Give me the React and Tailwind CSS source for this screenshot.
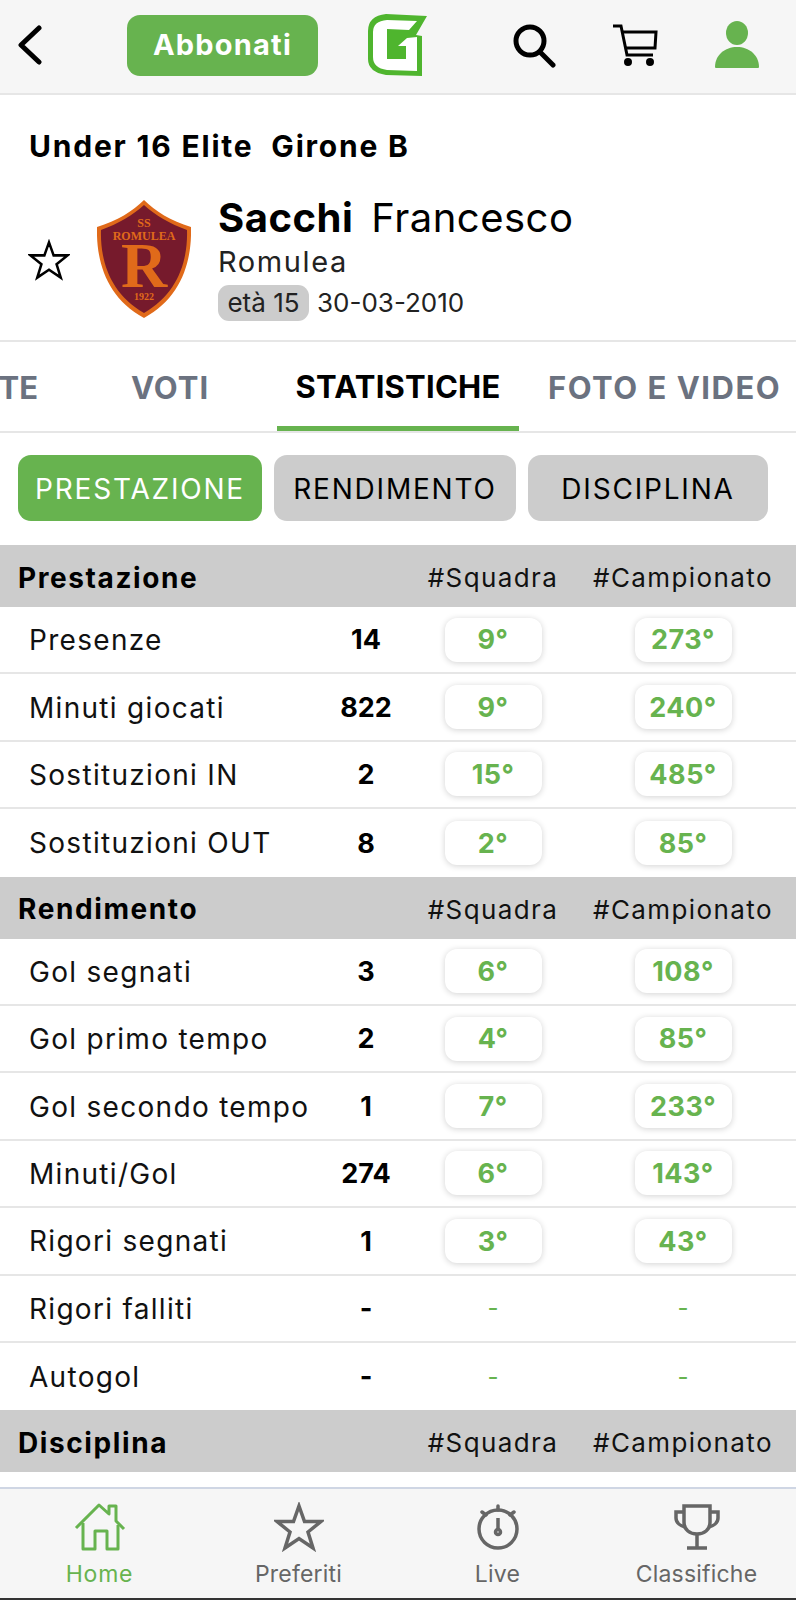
const GREEN = '#67b34f';

const SECTIONS = [
  {
    title: 'Prestazione',
    rows: [
      ['Presenze', '14', '9°', '273°'],
      ['Minuti giocati', '822', '9°', '240°'],
      ['Sostituzioni IN', '2', '15°', '485°'],
      ['Sostituzioni OUT', '8', '2°', '85°'],
    ],
  },
  {
    title: 'Rendimento',
    rows: [
      ['Gol segnati', '3', '6°', '108°'],
      ['Gol primo tempo', '2', '4°', '85°'],
      ['Gol secondo tempo', '1', '7°', '233°'],
      ['Minuti/Gol', '274', '6°', '143°'],
      ['Rigori segnati', '1', '3°', '43°'],
      ['Rigori falliti', '-', '-', '-'],
      ['Autogol', '-', '-', '-'],
    ],
  },
  { title: 'Disciplina', rows: [] },
];

const Logo = () => (
  <svg width="60" height="63" viewBox="18 15 60 63" className="shrink-0">
    <path d="M36 15 L77 17 L66 36 L72 37 L72 77 L36 76 Q18 73 18 60 L18 32 Q18 17 36 15 Z" fill="#4fb52e" />
    <path d="M37 21 L67 22 L59 31 L37 30 L37 60 L56 60 L56 47 L48 47 L57 39 L67 38 L67 72 L37 71 Q23 69 23 58 L23 33 Q23 22 37 21 Z" fill="#fff" />
  </svg>
);

const Crest = () => (
  <svg width="94" height="118" viewBox="0 0 94 118" className="shrink-0">
    <path d="M47 0 C58 11 74 21 94 27 C95 62 84 98 47 118 C10 98 -1 62 0 27 C20 21 36 11 47 0 Z" fill="#e06a1a" />
    <path d="M47 5 C58 15 73 24 90 30 C91 62 80 94 47 113 C14 94 3 62 4 30 C21 24 36 15 47 5 Z" fill="#761a2c" />
    <text x="47" y="27" textAnchor="middle" fontFamily="Liberation Serif" fontWeight="700" fontSize="12" fill="#e06a1a">SS</text>
    <text x="47" y="40" textAnchor="middle" fontFamily="Liberation Serif" fontWeight="700" fontSize="12" fill="#e06a1a">ROMULEA</text>
    <text x="47" y="87" textAnchor="middle" fontFamily="Liberation Serif" fontWeight="700" fontSize="64" fill="#e06a1a">R</text>
    <text x="47" y="100" textAnchor="middle" fontFamily="Liberation Serif" fontWeight="700" fontSize="10" fill="#e06a1a">1922</text>
  </svg>
);

const Star = ({ size, color, width }) => (
  <svg width={size} height={size} viewBox="0 0 50 48" fill="none" stroke={color} strokeWidth={width} strokeLinejoin="miter" className="shrink-0">
    <path d="M25 3 L30.5 18.5 L47 18.5 L34 29 L39 45 L25 35.5 L11 45 L16 29 L3 18.5 L19.5 18.5 Z" />
  </svg>
);

const Header = () => (
  <div className="h-[95px] shrink-0 bg-[#f6f6f6] border-b-2 border-[#e6e6e6] flex items-center">
    <svg width="24" height="40" viewBox="0 0 24 40" fill="none" stroke="#000" strokeWidth="5" strokeLinecap="round" strokeLinejoin="round" className="ml-[18px] mb-[3px]">
      <path d="M21 3 L3 20 L21 37" />
    </svg>
    <div className="ml-[85px] w-[191px] h-[61px] rounded-[13px] bg-[#67b34f] text-white font-bold text-[29px] tracking-[1.2px] flex items-center justify-center mb-[3px]">
      Abbonati
    </div>
    <div className="ml-[50px] mb-[3px]"><Logo /></div>
    <svg width="44" height="44" viewBox="0 0 44 44" fill="none" stroke="#000" strokeWidth="5" strokeLinecap="round" className="ml-[84px] mb-[2px]">
      <circle cx="18" cy="17" r="14" />
      <path d="M28 28 L41 41" />
    </svg>
    <svg width="46" height="42" viewBox="0 0 46 42" fill="none" stroke="#000" strokeWidth="3" className="ml-[56px] mb-[4px]">
      <path d="M1 2 L9 2 L15 31 L41 31" />
      <path d="M10 8 L44 8 L43 24 L13 24" />
      <circle cx="16" cy="38" r="2.5" fill="#000" />
      <circle cx="38" cy="38" r="2.5" fill="#000" />
    </svg>
    <svg width="44" height="48" viewBox="0 0 44 48" fill={GREEN} className="ml-[57px] mb-[4px]">
      <ellipse cx="22" cy="12" rx="11" ry="12" />
      <path d="M0 46 C0 34 10 26 22 26 C34 26 44 34 44 46 Q44 47 43 47 L1 47 Q0 47 0 46 Z" />
    </svg>
  </div>
);

const Profile = () => (
  <div className="shrink-0 h-[247px] border-b-2 border-[#e6e6e6] pt-[31px]">
    <div className="pl-[29px] font-bold text-[30px] leading-[40px] text-black tracking-[1.8px]">Under 16 Elite&nbsp; Girone B</div>
    <div className="flex items-center mt-[30px]">
      <div className="ml-[28px] mt-[2px]"><Star size={42} color="#000" width={3} /></div>
      <div className="ml-[27px]"><Crest /></div>
      <div className="ml-[27px] flex flex-col">
        <div className="text-[40px] leading-[44px] text-black tracking-[0.5px]">
          <span className="font-bold">Sacchi</span>
          <span className="ml-[18px]">Francesco</span>
        </div>
        <div className="text-[29px] leading-[34px] mt-[5px] text-[#222] tracking-[1.6px]">Romulea</div>
        <div className="flex items-center mt-[4px]">
          <span className="w-[91px] h-[36px] rounded-[11px] bg-[#cccccc] text-[26px] text-[#222] flex items-center justify-center">età 15</span>
          <span className="ml-[8px] text-[26px] text-[#222]">30-03-2010</span>
        </div>
      </div>
    </div>
  </div>
);

const Tabs = () => (
  <div className="shrink-0 h-[91px] border-b-2 border-[#e6e6e6] flex overflow-hidden font-bold text-[31px] text-[#6b7280]">
    <div className="w-[38px] shrink-0 flex items-center justify-end pt-[4px]">TE</div>
    <div className="w-[264px] shrink-0 flex items-center justify-center pt-[4px] tracking-[1px]">VOTI</div>
    <div className="-ml-[25px] w-[242px] h-[89px] shrink-0 flex items-center justify-center pt-[7px] border-b-[5px] border-[#67b34f] text-black tracking-[0.2px]">STATISTICHE</div>
    <div className="ml-[29px] shrink-0 flex items-center pt-[4px] whitespace-nowrap tracking-[1.5px]">FOTO E VIDEO</div>
  </div>
);

const FILTERS = ['PRESTAZIONE', 'RENDIMENTO', 'DISCIPLINA'];

const Filters = () => (
  <div className="shrink-0 h-[112px] pt-[22px] pl-[18px] flex gap-[12px]">
    {FILTERS.map((f, i) => (
      <div
        key={f}
        className={`h-[66px] rounded-[13px] flex items-center justify-center pt-[1px] text-[28px] tracking-[1.8px] ${i === 0 ? 'w-[244px] bg-[#67b34f] text-white' : i === 1 ? 'w-[242px] bg-[#cccccc] text-black' : 'w-[240px] bg-[#cccccc] text-black'}`}
      >
        {f}
      </div>
    ))}
  </div>
);

const COLS = 'grid grid-cols-[316px_100px_154px_226px] items-center';

const Rank = ({ value }) =>
  value === '-' ? (
    <span className="text-[24px] text-[#67b34f]">-</span>
  ) : (
    <span className="w-[97px] h-[44px] rounded-[12px] bg-white shadow-[0_1px_6px_rgba(0,0,0,0.18)] flex items-center justify-center pt-[2px] font-bold text-[27px] tracking-[0.5px] text-[#67b34f]">
      {value}
    </span>
  );

const Row = ({ row }) => (
  <div className={`${COLS} h-[67.4px] border-b-2 border-[#e6e6e6] last:border-b-0`}>
    <div className="pl-[29px] pt-[1px] text-[28px] tracking-[1.3px] text-[#111] whitespace-nowrap">{row[0]}</div>
    <div className="text-center pt-[2px] font-bold text-[27px] text-black">{row[1]}</div>
    <div className="flex justify-center"><Rank value={row[2]} /></div>
    <div className="flex justify-center"><Rank value={row[3]} /></div>
  </div>
);

const Section = ({ section }) => (
  <div>
    <div className={`${COLS} h-[62px] bg-[#cccccc]`}>
      <div className="pl-[18px] pt-[3px] font-bold text-[28px] tracking-[1.6px] text-black">{section.title}</div>
      <div />
      <div className="text-center pt-[3px] text-[26px] tracking-[1.4px] text-[#111]">#Squadra</div>
      <div className="text-center pt-[3px] text-[26px] tracking-[1.4px] text-[#111]">#Campionato</div>
    </div>
    {section.rows.map(r => <Row key={r[0]} row={r} />)}
  </div>
);

const NAV = [
  { label: 'Home', active: true, icon: (
    <svg width="52" height="48" viewBox="0 0 52 48" fill="none" stroke={GREEN} strokeWidth="3" strokeLinejoin="round">
      <path d="M2 25 L25 2 L35 11 L35 3 L42 3 L42 18 L50 26" />
      <path d="M9 20 L9 46 L21 46 L21 28 L33 28 L33 46 L44 46 L44 22" />
    </svg>
  ) },
  { label: 'Preferiti', icon: <Star size={50} color="#666" width={3.5} /> },
  { label: 'Live', icon: (
    <svg width="42" height="46" viewBox="0 0 42 46" fill="none" stroke="#666" strokeWidth="3.5">
      <circle cx="21" cy="25" r="19" />
      <path d="M21 2 L21 6 M5 8 L9 11 M37 8 L33 11" strokeLinecap="round" />
      <path d="M21 14 L21 26" />
      <circle cx="21" cy="28" r="2.5" />
    </svg>
  ) },
  { label: 'Classifiche', icon: (
    <svg width="46" height="46" viewBox="0 0 46 46" fill="none" stroke="#666" strokeWidth="3.5">
      <path d="M10 2 L36 2 L36 18 C36 26 30 30 23 30 C16 30 10 26 10 18 Z" />
      <path d="M10 8 L2 8 L2 14 C2 19 7 22 11 23 M36 8 L44 8 L44 14 C44 19 39 22 35 23" />
      <path d="M23 30 L23 44 M13 44 L33 44" />
    </svg>
  ) },
];

const BottomNav = () => (
  <div className="shrink-0 h-[113px] bg-[#f6f6f6] border-t-2 border-[#cfd6e4] border-b-2 border-b-[#333] grid grid-cols-[199px_199px_199px_199px] pt-[14px]">
    {NAV.map(n => (
      <div key={n.label} className="flex flex-col items-center">
        <div className="h-[48px] flex items-center justify-center">{n.icon}</div>
        <div className={`mt-[9px] text-[23px] leading-[28px] ${n.active ? 'text-[#67b34f] tracking-[0.8px]' : 'text-[#666666] tracking-[0.2px]'}`}>{n.label}</div>
      </div>
    ))}
  </div>
);

export default function App() {
  return (
    <div className="w-[796px] h-[1600px] flex flex-col overflow-hidden bg-white font-['Inter',sans-serif]">
      <Header />
      <Profile />
      <Tabs />
      <Filters />
      <div className="flex-1 overflow-hidden">
        {SECTIONS.map(s => <Section key={s.title} section={s} />)}
      </div>
      <BottomNav />
    </div>
  );
}
